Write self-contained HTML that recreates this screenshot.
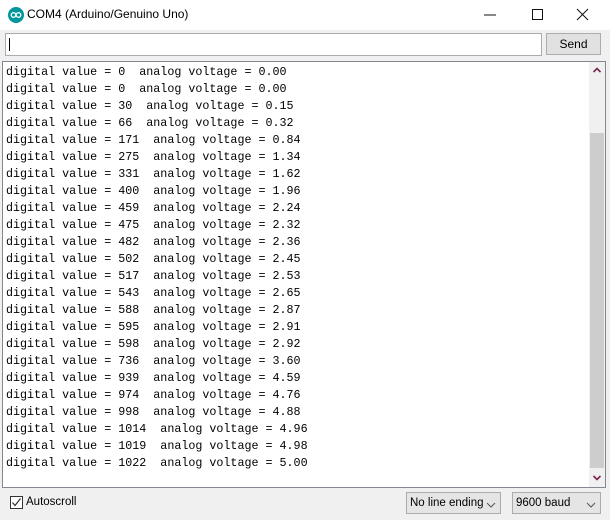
<!DOCTYPE html>
<html><head><meta charset="utf-8"><style>
*{margin:0;padding:0;box-sizing:border-box}
body{width:610px;height:520px;background:#f0f0f0;position:relative;overflow:hidden;font-family:"Liberation Sans",sans-serif}
.title{position:absolute;left:0;top:0;width:610px;height:30px;background:#fff}
.title .t{position:absolute;left:27px;top:7px;font-size:12px;color:#000}
.logo{position:absolute;left:8px;top:7px;width:16px;height:16px;border-radius:50%;background:#00979c}
.input{position:absolute;left:5px;top:33px;width:537px;height:23px;background:#fff;border:1px solid #acacac}
.input:after{content:"";position:absolute;left:3px;top:4px;width:1px;height:13px;background:#000}
.send{position:absolute;left:546px;top:33px;width:55px;height:22px;background:#e1e1e1;border:1px solid #adadad;font-size:12px;text-align:center;line-height:20px}
.area{position:absolute;left:2px;top:61px;width:604px;height:427px;background:#fff;border:1px solid #828790}
.sb{position:absolute;right:0;top:0;width:16px;height:425px;background:#f0f0f0}
.thumb{position:absolute;left:1px;top:71px;width:14px;height:335px;background:#cdcdcd}
pre{position:absolute;left:3px;top:2px;font-family:"Liberation Mono",monospace;font-size:11.7px;line-height:17px;color:#000}
.cb{position:absolute;left:10px;top:496px;width:13px;height:13px;border:1px solid #333;background:#fff}
.lbl{position:absolute;left:26px;top:496px;font-size:11.5px}
.sel{position:absolute;top:492px;height:22px;background:#e5e5e5;border:1px solid #acacac;font-size:11.5px;line-height:20px;padding-left:3px}
.sel span{position:absolute;right:4px;top:4px}
</style></head><body>
<div class="title"><div class="logo"><svg width="16" height="16"><circle cx="5.5" cy="8" r="2.3" fill="none" stroke="#fff" stroke-width="1.3"/><circle cx="10.5" cy="8" r="2.3" fill="none" stroke="#fff" stroke-width="1.3"/></svg></div><div class="t">COM4 (Arduino/Genuino Uno)</div>
<svg style="position:absolute;left:480px;top:8px" width="120" height="14"><line x1="4" y1="7" x2="16" y2="7" stroke="#111"/><rect x="52.5" y="1.5" width="10" height="10" fill="none" stroke="#111"/><path d="M97 1L108 12M108 1L97 12" stroke="#111"/></svg></div>
<div class="input"></div>
<div class="send">Send</div>
<div class="area">
<pre>digital value = 0  analog voltage = 0.00
digital value = 0  analog voltage = 0.00
digital value = 30  analog voltage = 0.15
digital value = 66  analog voltage = 0.32
digital value = 171  analog voltage = 0.84
digital value = 275  analog voltage = 1.34
digital value = 331  analog voltage = 1.62
digital value = 400  analog voltage = 1.96
digital value = 459  analog voltage = 2.24
digital value = 475  analog voltage = 2.32
digital value = 482  analog voltage = 2.36
digital value = 502  analog voltage = 2.45
digital value = 517  analog voltage = 2.53
digital value = 543  analog voltage = 2.65
digital value = 588  analog voltage = 2.87
digital value = 595  analog voltage = 2.91
digital value = 598  analog voltage = 2.92
digital value = 736  analog voltage = 3.60
digital value = 939  analog voltage = 4.59
digital value = 974  analog voltage = 4.76
digital value = 998  analog voltage = 4.88
digital value = 1014  analog voltage = 4.96
digital value = 1019  analog voltage = 4.98
digital value = 1022  analog voltage = 5.00</pre>
<div class="sb"><svg style="position:absolute;left:4px;top:5px" width="8" height="6"><path d="M0.5 5L4 1.5L7.5 5" fill="none" stroke="#7a1f4f" stroke-width="1.6"/></svg><div class="thumb"></div><svg style="position:absolute;left:4px;top:413px" width="8" height="6"><path d="M0.5 1L4 4.5L7.5 1" fill="none" stroke="#7a1f4f" stroke-width="1.6"/></svg></div>
</div>
<div class="cb"><svg width="11" height="11" style="position:absolute;left:0;top:0"><path d="M1.5 5.5L4 8.5L9.5 1.5" fill="none" stroke="#333" stroke-width="1.2"/></svg></div>
<div class="lbl">Autoscroll</div>
<div class="sel" style="left:406px;width:95px">No line ending<span><svg width="10" height="10"><path d="M1 3L5 7L9 3" fill="none" stroke="#555"/></svg></span></div>
<div class="sel" style="left:512px;width:89px">9600 baud<span><svg width="10" height="10"><path d="M1 3L5 7L9 3" fill="none" stroke="#555"/></svg></span></div>
</body></html>
